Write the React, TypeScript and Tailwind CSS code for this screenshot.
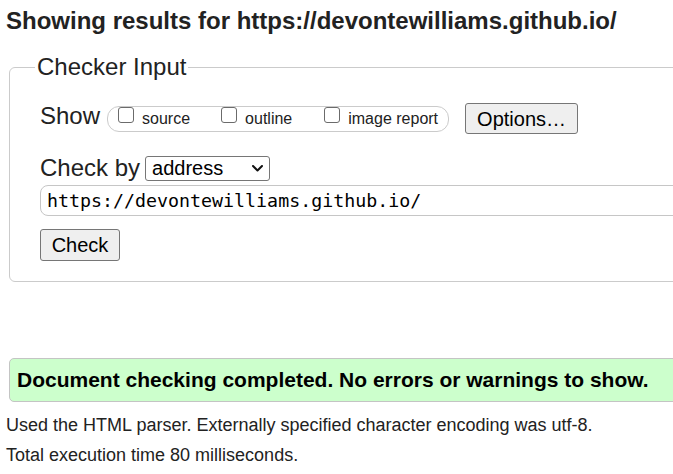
import React from "react";

const Checkbox: React.FC<{ label: string; className?: string }> = ({
  label,
  className = "",
}) => (
  <label className={`flex items-start ${className}`}>
    <input
      type="checkbox"
      className="h-[16px] w-[16px] appearance-none rounded-[3px] border border-[#6b6b6b] bg-white"
    />
    <span className="ml-[8px] mt-[3px]">{label}</span>
  </label>
);

export default function App() {
  return (
    <div className="min-h-screen w-full overflow-hidden bg-white font-['Liberation_Sans',Arial,sans-serif] text-[#222]">
      <div className="w-[900px]">
        <h2 className="ml-[6px] pt-[7px] text-[24px] font-bold leading-[28px]">
          Showing results for https://devontewilliams.github.io/
        </h2>

        {/* Checker input */}
        <fieldset className="ml-[9px] mt-[18px] w-[860px] rounded-[6px] border border-[#cbcbcb] pb-[20px] pl-[30px]">
          <legend className="-ml-[5px] px-[2px] text-[24px] leading-[28px]">
            Checker Input
          </legend>

          <div className="mt-[22px] flex h-[31px] items-center">
            <span className="mb-[6px] mr-[7px] text-[24px] leading-[28px]">
              Show
            </span>
            <div className="flex h-[26px] items-start rounded-[12px] border border-[#cbcbcb] pl-[10px] pr-[10px] text-[16px] leading-[18px]">
              <Checkbox label="source" />
              <Checkbox label="outline" className="ml-[31px]" />
              <Checkbox label="image report" className="ml-[32px]" />
            </div>
            <button className="ml-[16px] h-[31px] w-[113px] rounded-[3px] border border-[#767676] bg-[#efefef] text-[20px] leading-[24px] text-black">
              Options…
            </button>
          </div>

          <div className="mt-[20px] flex h-[28px] items-center">
            <span className="text-[24px] leading-[28px]">Check by</span>
            <div className="relative ml-[5px] h-[25px] w-[125px]">
              <select className="h-full w-full appearance-none rounded-[3px] border border-[#767676] bg-white pl-[6px] text-[20px] leading-[23px] text-black">
                <option>address</option>
              </select>
              <svg
                className="pointer-events-none absolute right-[7px] top-[9px]"
                width="11"
                height="7"
                viewBox="0 0 11 7"
                fill="none"
              >
                <path
                  d="M1 1l4.5 4.5L10 1"
                  stroke="#111"
                  strokeWidth="2"
                  strokeLinecap="round"
                  strokeLinejoin="round"
                />
              </svg>
            </div>
          </div>

          <input
            type="text"
            readOnly
            value="https://devontewilliams.github.io/"
            className="mt-[3px] block h-[31px] w-[830px] rounded-[8px] border border-[#c6c6c6] pl-[6px] font-['DejaVu_Sans_Mono',monospace] text-[18.3px] text-black"
          />

          <button className="mt-[13px] block h-[32px] w-[80px] rounded-[3px] border border-[#767676] bg-[#efefef] text-[20px] leading-[24px] text-black">
            Check
          </button>
        </fieldset>

        {/* Result */}
        <div className="ml-[9px] mt-[76px] flex h-[44px] w-[860px] items-center rounded-[5px] border border-[#c4c4c4] bg-[#ccffcc] pl-[7px] text-[21px] font-bold text-black">
          Document checking completed. No errors or warnings to show.
        </div>

        <p className="ml-[6px] mt-[12px] text-[18px] leading-[22px]">
          Used the HTML parser. Externally specified character encoding was utf-8.
        </p>
        <p className="ml-[6px] mt-[8px] text-[18px] leading-[22px]">
          Total execution time 80 milliseconds.
        </p>
      </div>
    </div>
  );
}
